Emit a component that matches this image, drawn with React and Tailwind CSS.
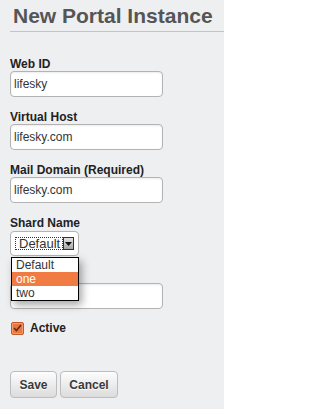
import React from "react";

const fields = [
  { label: "Web ID", value: "lifesky" },
  { label: "Virtual Host", value: "lifesky.com" },
  { label: "Mail Domain (Required)", value: "lifesky.com" },
];

const TextInput = ({ value }) => (
  <div className="h-[26px] w-[153px] rounded-[4px] border border-[#b3b3b3] bg-white pl-[3px] text-[12px] leading-[24px] text-[#333] shadow-[inset_0_1px_2px_rgba(0,0,0,0.08)]">
    {value}
  </div>
);

const Label = ({ children }) => (
  <div className="h-[14px] text-[12px] font-bold leading-[14px] text-[#222]">{children}</div>
);

export default function App() {
  return (
    <div
      className="min-h-[409px] w-[224px] overflow-hidden bg-[#eeeff1] pt-[4px]"
      style={{ fontFamily: '"Liberation Sans", Arial, sans-serif' }}
    >
      {/* Header */}
      <div className="ml-[10px] border-b border-[#c4c4c4] pb-[3px] pl-[3px]">
        <h1 className="whitespace-nowrap text-[21px] font-bold leading-[24px] text-[#555]">
          New Portal Instance
        </h1>
      </div>

      <div className="flex flex-col px-[10px] pt-[25px]">
        {fields.map((f, i) => (
          <div key={i} className="mb-[13px] flex flex-col">
            <Label>{f.label}</Label>
            <TextInput value={f.value} />
          </div>
        ))}

        {/* Shard select */}
        <div className="relative mb-[13px] flex flex-col">
          <Label>Shard Name</Label>
          <div className="mt-px flex h-[25px] w-[69px] items-center rounded-[4px] border border-[#b3b3b3] bg-white pl-[4px]">
            <div className="flex h-[13px] w-[48px] items-center border border-dotted border-[#333] pl-[3px] text-[13px] leading-[13px] text-[#333]">
              Default
            </div>
            <div className="flex h-[13px] w-[11px] items-center justify-center border border-[#333] bg-gradient-to-b from-[#e4e4e4] to-[#a8a8a8]">
              <svg width="7" height="4" viewBox="0 0 7 4">
                <path d="M0 0h7L3.5 4z" fill="#111" />
              </svg>
            </div>
          </div>

          {/* open dropdown */}
          <div className="absolute left-[1px] top-[41px] z-10 w-[68px] border border-black bg-white text-[12px] leading-[14px] text-[#333] shadow-[3px_4px_8px_rgba(0,0,0,0.35)]">
            <div className="pl-[4px]">Default</div>
            <div className="bg-[#f07b43] pl-[4px] text-white">one</div>
            <div className="pl-[4px]">two</div>
          </div>
        </div>

        {/* field hidden behind the open list */}
        <div className="mb-[12px] flex flex-col">
          <div className="h-[14px]" />
          <TextInput value="" />
        </div>

        {/* Active */}
        <div className="flex items-center gap-[6px] pl-px">
          <div className="flex h-[13px] w-[13px] items-center justify-center rounded-[2px] border border-[#c25a2a] bg-[#e9773f] shadow-[inset_0_0_0_1px_#f49a6c]">
            <svg width="9" height="8" viewBox="0 0 9 8">
              <path d="M1 4l2.4 2.6L8 1" fill="none" stroke="#6b2a10" strokeWidth="1.6" />
            </svg>
          </div>
          <span className="text-[12px] font-bold leading-[14px] text-[#222]">Active</span>
        </div>

        {/* Buttons */}
        <div className="mt-[36px] flex gap-[3px]">
          <button className="h-[27px] w-[47px] rounded-[4px] border border-[#bdbdbd] bg-gradient-to-b from-[#fdfdfd] to-[#dcdcdc] text-[12px] font-bold text-[#3a3a3a] [text-shadow:0_1px_0_#fff]">
            Save
          </button>
          <button className="h-[27px] w-[58px] rounded-[4px] border border-[#bdbdbd] bg-gradient-to-b from-[#fdfdfd] to-[#dcdcdc] text-[12px] font-bold text-[#3a3a3a] [text-shadow:0_1px_0_#fff]">
            Cancel
          </button>
        </div>
      </div>
    </div>
  );
}
